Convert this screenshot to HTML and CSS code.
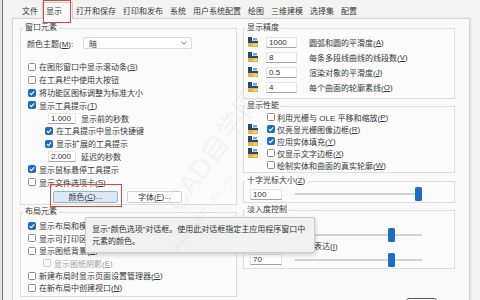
FILE: index.html
```html
<!DOCTYPE html>
<html lang="zh-CN">
<head>
<meta charset="utf-8">
<title>选项 - 显示</title>
<link rel="stylesheet" href="styles.css">
</head>
<body>
<svg class="sprite" width="0" height="0" aria-hidden="true">
  <symbol id="ck" viewBox="0 0 6 6"><path d="M0.9 3.1 L2.4 4.6 L5.2 1.4" fill="none" stroke="#fff" stroke-width="1.1"/></symbol>
  <symbol id="dwg" viewBox="0 0 12 12">
    <rect x="1" y="6" width="10" height="5" fill="#e4b43e"/>
    <rect x="1" y="1" width="4" height="6" fill="#28477c"/>
    <rect x="1" y="5" width="10" height="2" fill="#28477c"/>
    <rect x="6" y="2" width="4" height="2.5" fill="#7ea3cf"/>
    <rect x="6" y="8" width="4" height="2" fill="#f3d27c"/>
  </symbol>
  <symbol id="chev" viewBox="0 0 6 4"><path d="M0.5 0.8 L3 3.2 L5.5 0.8" fill="none" stroke="#555" stroke-width="0.8"/></symbol>
</svg>

<div class="dialog">
  <div class="tabs">
    <span class="tab">文件</span>
    <span class="tab active">显示</span>
    <span class="tab">打开和保存</span>
    <span class="tab">打印和发布</span>
    <span class="tab">系统</span>
    <span class="tab">用户系统配置</span>
    <span class="tab">绘图</span>
    <span class="tab">三维建模</span>
    <span class="tab">选择集</span>
    <span class="tab">配置</span>
  </div>

  <div class="panel">
    <div class="col left">
      <fieldset class="group g-window">
        <legend>窗口元素</legend>
        <div class="theme-row">
          <span class="theme-label">颜色主题(<u>M</u>):</span>
          <span class="select">暗<svg class="chev"><use href="#chev"/></svg></span>
        </div>
        <div class="checks">
          <div class="row"><span class="cb"></span>在图形窗口中显示滚动条(<u>S</u>)</div>
          <div class="row"><span class="cb"></span>在工具栏中使用大按钮</div>
          <div class="row"><span class="cb on"><svg><use href="#ck"/></svg></span>将功能区图标调整为标准大小</div>
          <div class="row"><span class="cb on"><svg><use href="#ck"/></svg></span>显示工具提示(<u>T</u>)</div>
          <div class="row num-row"><span class="field">1.000</span>显示前的秒数</div>
          <div class="row ind"><span class="cb on"><svg><use href="#ck"/></svg></span>在工具提示中显示快捷键</div>
          <div class="row ind"><span class="cb on"><svg><use href="#ck"/></svg></span>显示扩展的工具提示</div>
          <div class="row num-row"><span class="field">2.000</span>延迟的秒数</div>
          <div class="row"><span class="cb on"><svg><use href="#ck"/></svg></span>显示鼠标悬停工具提示</div>
          <div class="row"><span class="cb"></span>显示文件选项卡(<u>S</u>)</div>
        </div>
        <div class="btn-row">
          <span class="btn btn-color">颜色(<u>C</u>)...</span>
          <span class="btn btn-font">字体(<u>F</u>)...</span>
        </div>
      </fieldset>

      <fieldset class="group g-layout">
        <legend>布局元素</legend>
        <div class="row lrow"><span class="cb on"><svg><use href="#ck"/></svg></span>显示布局和模型选项卡(<u>L</u>)</div>
        <div class="row lrow"><span class="cb"></span>显示可打印区域(<u>B</u>)</div>
        <div class="row lrow"><span class="cb"></span>显示图纸背景(<u>K</u>)</div>
        <div class="row lrow ind2 disabled"><span class="cb"></span>显示图纸阴影(<u>E</u>)</div>
        <div class="row lrow"><span class="cb"></span>新建布局时显示页面设置管理器(<u>G</u>)</div>
        <div class="row lrow"><span class="cb"></span>在新布局中创建视口(<u>N</u>)</div>
      </fieldset>
    </div>

    <div class="col right">
      <fieldset class="group g-prec">
        <legend>显示精度</legend>
        <div class="prec-row"><svg class="icon"><use href="#dwg"/></svg><span class="field wide">1000</span>圆弧和圆的平滑度(<u>A</u>)</div>
        <div class="prec-row"><svg class="icon"><use href="#dwg"/></svg><span class="field wide">8</span>每条多段线曲线的线段数(<u>V</u>)</div>
        <div class="prec-row"><svg class="icon"><use href="#dwg"/></svg><span class="field wide">0.5</span>渲染对象的平滑度(<u>J</u>)</div>
        <div class="prec-row"><svg class="icon"><use href="#dwg"/></svg><span class="field wide">4</span>每个曲面的轮廓素线(<u>O</u>)</div>
      </fieldset>

      <fieldset class="group g-perf">
        <legend>显示性能</legend>
        <div class="perf-row"><span class="icon-slot"></span><span class="cb"></span>利用光栅与 OLE 平移和缩放(<u>P</u>)</div>
        <div class="perf-row"><svg class="icon-slot"><use href="#dwg"/></svg><span class="cb on"><svg><use href="#ck"/></svg></span>仅亮显光栅图像边框(<u>R</u>)</div>
        <div class="perf-row"><svg class="icon-slot"><use href="#dwg"/></svg><span class="cb on"><svg><use href="#ck"/></svg></span>应用实体填充(<u>Y</u>)</div>
        <div class="perf-row"><svg class="icon-slot"><use href="#dwg"/></svg><span class="cb"></span>仅显示文字边框(<u>X</u>)</div>
        <div class="perf-row"><span class="icon-slot"></span><span class="cb"></span>绘制实体和曲面的真实轮廓(<u>W</u>)</div>
      </fieldset>

      <fieldset class="group g-cross">
        <legend>十字光标大小(<u>Z</u>)</legend>
        <div class="slider-row cross-row">
          <span class="field num">100</span>
          <div class="track" style="--v:1"><span class="seg lo"></span><span class="thumb"></span><span class="seg hi"></span></div>
        </div>
      </fieldset>

      <fieldset class="group g-fade">
        <legend>淡入度控制</legend>
        <div class="fade-label">外部参照显示(<u>E</u>)</div>
        <div class="slider-row fade-row">
          <span class="field num">70</span>
          <div class="track" style="--v:0.778"><span class="seg lo"></span><span class="thumb"></span><span class="seg hi"></span></div>
        </div>
        <div class="fade-label">在位编辑和注释性表达(<u>I</u>)</div>
        <div class="slider-row fade-row">
          <span class="field num">70</span>
          <div class="track" style="--v:0.778"><span class="seg lo"></span><span class="thumb"></span><span class="seg hi"></span></div>
        </div>
      </fieldset>

      <span class="ok-btn"></span>
    </div>
  </div>
</div>

<div class="tooltip">显示“颜色选项”对话框。使用此对话框指定主应用程序窗口中<br>元素的颜色。</div>
<div class="watermark wm1">CAD自学网</div>
<div class="watermark wm2">www.cadzxw.com</div>
</body>
</html>
```

FILE: styles.css
```css
* { box-sizing: border-box; }
html, body { margin: 0; padding: 0; }
body {
  position: relative;
  width: 480px;
  height: 300px;
  overflow: hidden;
  background: #e2e2e2;
  font-family: "Liberation Sans", "Noto Sans CJK SC", sans-serif;
  font-size: 8px;
  color: #383838;
}
u { text-decoration: underline; text-underline-offset: 1px; }

.sprite { position: absolute; width: 0; height: 0; overflow: hidden; }

.dialog {
  margin-left: 2px;
  height: 300px;
  border-left: 1px solid #7a7a7a;
  background: #f3f3f3;
  padding-left: 9px;
}

/* tabs */
.tabs {
  display: flex;
  align-items: flex-start;
  height: 18px;
  padding-left: 6.5px;
}
.tab {
  height: 18px;
  padding: 6px 3.5px 0;
  line-height: 12px;
  white-space: nowrap;
  color: #3a3a3a;
}
.tab.active {
  position: relative;
  z-index: 1;
  margin-top: 2px;
  height: 17px;
  padding: 3px 9.5px 0 3.5px;
  background: #f9f9f9;
  border: 1px solid #cdcdcd;
  border-bottom: none;
}
.tab.active::after {
  content: "";
  position: absolute;
  left: 0.5px;
  right: 0.5px;
  top: -3px;
  bottom: -4px;
  border: 1.5px solid #d8463e;
}

/* panel */
.panel {
  width: 458px;
  height: 290px;
  display: flex;
  gap: 6px;
  padding: 4px 14px 0 7px;
  background: #f9f9f9;
  border: 1px solid #d4d4d4;
  box-shadow: 1px 0 2px rgba(0, 0, 0, 0.08);
}
.col { display: flex; flex-direction: column; }
.col.left { width: 217px; }
.col.right { width: 212px; }

.group {
  margin: 0;
  min-width: 0;
  border: 1px solid #dedede;
  background: #fbfbfb;
}
.group legend {
  height: 10px;
  line-height: 10px;
  padding: 0 2px;
  color: #3a3a3a;
}
.col.left .group { padding: 0 6px; }
.col.left .group legend { margin-left: -4px; }
.col.right .group { padding: 0 3px; }
.col.right .group legend { margin-left: -2px; }

/* window elements */
.g-window { padding-top: 4px !important; padding-bottom: 1px !important; }
.theme-row { display: flex; align-items: center; height: 12px; }
.theme-label { width: 56px; white-space: nowrap; }
.select {
  display: flex;
  align-items: center;
  justify-content: space-between;
  width: 109px;
  height: 12px;
  padding: 0 4px 0 5px;
  background: #fff;
  border: 1px solid #dadada;
  border-radius: 2px;
}
.chev { width: 6px; height: 4px; }

.checks { margin-top: 11.6px; }
.row {
  display: flex;
  align-items: center;
  height: 12.8px;
  padding-left: 1px;
  white-space: nowrap;
}
.row.ind { padding-left: 18px; }
.row.num-row { padding-left: 21px; }
.num-row .field { width: 28px; margin-right: 5px; }

.cb {
  flex: none;
  display: flex;
  align-items: center;
  justify-content: center;
  width: 8px;
  height: 8px;
  margin-right: 3px;
  background: #fff;
  border: 1px solid #8a8a8a;
  border-radius: 1.5px;
}
.cb.on { background: #1b6cc3; border-color: #1b6cc3; }
.cb svg { width: 6px; height: 6px; }

.field {
  flex: none;
  display: flex;
  align-items: center;
  height: 11px;
  padding: 0 2px;
  background: #fff;
  border: 1px solid #e4e4e4;
  border-bottom-color: #a3a3a3;
  border-radius: 1px;
  color: #333;
}

.btn-row { display: flex; margin-top: 2.4px; }
.btn {
  display: flex;
  align-items: center;
  justify-content: center;
  height: 12px;
  border: 1px solid #d0d0d0;
  border-radius: 2px;
  background: #fdfdfd;
  white-space: nowrap;
}
.btn-color {
  position: relative;
  width: 65px;
  margin-left: 26px;
  background: #dbe8f5;
  border-color: #8db2db;
}
.btn-color::after {
  content: "";
  position: absolute;
  left: -4px;
  right: -5px;
  top: -8px;
  bottom: -5px;
  border: 1.5px solid #d8463e;
}
.btn-font { width: 55px; margin-left: 9px; }

/* layout elements */
.g-layout { margin-top: 2.5px; padding-top: 2.3px !important; padding-bottom: 2px !important; }
.row.lrow { height: 12.4px; }
.row.ind2 { padding-left: 16px; }
.row.disabled { color: #a2a2a2; }
.row.disabled .cb { border-color: #c9c9c9; }

/* precision */
.g-prec { padding-top: 1.5px !important; padding-bottom: 3px !important; }
.prec-row { display: flex; align-items: center; height: 15px; white-space: nowrap; }
.icon { flex: none; width: 12px; height: 12px; margin-right: 7px; }
.field.wide { width: 31px; margin-right: 12px; }

/* performance */
.g-perf { margin-top: 2.5px; padding-bottom: 1px !important; }
.perf-row { display: flex; align-items: center; height: 12px; white-space: nowrap; }
.icon-slot { flex: none; width: 12px; height: 12px; margin-right: 8px; }
.perf-row .cb { margin-right: 2px; }

/* sliders */
.g-cross { margin-top: 3px; padding-top: 1.5px !important; padding-bottom: 1.5px !important; }
.slider-row { display: flex; align-items: center; padding-left: 3px; }
.cross-row { height: 13px; }
.field.num { width: 32px; margin-right: 13px; }
.track { display: flex; align-items: center; width: 127px; height: 14px; }
.seg { height: 2px; background: #d2d2d2; }
.seg.lo { flex: 0 0 calc((100% - 7px) * var(--v)); }
.seg.hi { flex: 1 1 auto; }
.thumb { flex: none; width: 7px; height: 14px; background: #1a6ec6; border-radius: 1.5px; }

.g-fade { margin-top: 2px; padding-top: 1px !important; padding-bottom: 2px !important; }
.fade-label { height: 12.5px; line-height: 12.5px; padding-left: 3px; white-space: nowrap; }
.fade-row { height: 12.5px; }

.ok-btn {
  display: block;
  width: 31px;
  height: 20px;
  margin: 29px 18px 0 auto;
  border: 1px solid #555;
  border-radius: 3px;
  background: #fdfdfd;
}

/* overlays */
.tooltip {
  position: absolute;
  left: 85px;
  top: 217px;
  width: 230px;
  height: 36px;
  padding: 6px 0 0 6px;
  background: #f1f1f1;
  border: 1px solid #cbcbcb;
  border-radius: 2px;
  box-shadow: 1px 2px 4px rgba(0, 0, 0, 0.18);
  line-height: 12px;
  white-space: nowrap;
  color: #333;
}
.watermark {
  position: absolute;
  pointer-events: none;
  white-space: nowrap;
  line-height: 1;
  color: rgba(0, 0, 0, 0.055);
  transform: rotate(-54deg);
  transform-origin: center center;
}
.wm1 { left: 143px; top: 136px; font-size: 28px; }
.wm2 { left: 155px; top: 207px; font-size: 12px; }
```
